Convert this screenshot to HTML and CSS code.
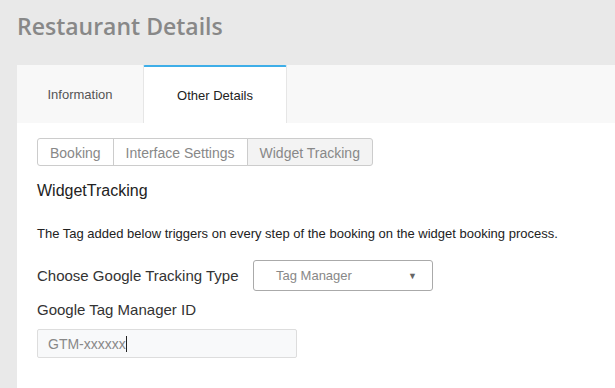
FILE: index.html
```html
<!DOCTYPE html>
<html>
<head>
    <title>Restaurant Details</title>
    <link rel="stylesheet" href="styles.css">
</head>
<body>
    <div class="page">
        <h1 class="page-title">Restaurant Details</h1>
        <div class="panel">
            <div class="tabs">
                <div class="tab">Information</div>
                <div class="tab active">Other Details</div>
            </div>
            <div class="panel-body">
                <div class="btn-group">
                    <button class="btn">Booking</button>
                    <button class="btn">Interface Settings</button>
                    <button class="btn active">Widget Tracking</button>
                </div>
                <h3 class="section-title">WidgetTracking</h3>
                <p class="note">The Tag added below triggers on every step of the booking on the widget booking process.</p>
                <div class="row">
                    <label class="field-label">Choose Google Tracking Type</label>
                    <div class="select">
                        <span>Tag Manager</span>
                        <span class="caret">&#9660;</span>
                    </div>
                </div>
                <label class="field-label">Google Tag Manager ID</label>
                <div class="input"><span>GTM-xxxxxx</span><span class="cursor"></span></div>
            </div>
        </div>
    </div>
</body>
</html>
```

FILE: styles.css
```css
body {
    margin: 0;
    font-family: "Liberation Sans", Arial, sans-serif;
    background: #e9e9e9;
}
.page {
    padding-left: 17px;
}
.page-title {
    margin: 0;
    height: 65px;
    padding-top: 10px;
    box-sizing: border-box;
    font-family: "Open Sans", sans-serif;
    font-weight: 600;
    font-size: 23px;
    color: #888;
}
.panel {
    background: #fff;
    height: 323px;
}
.tabs {
    display: flex;
    height: 58px;
    background: #f8f8f8;
}
.tab {
    width: 126px;
    display: flex;
    align-items: center;
    justify-content: center;
    font-size: 13px;
    color: #555;
    box-sizing: border-box;
}
.tab.active {
    width: 144px;
    background: #fff;
    color: #222;
    border-top: 2px solid #3eaee8;
    border-left: 1px solid #e6e6e6;
    border-right: 1px solid #e6e6e6;
    border-top-left-radius: 2px;
    border-top-right-radius: 2px;
}
.panel-body {
    padding: 15px 20px;
}
.btn-group {
    display: inline-flex;
}
.btn {
    height: 28px;
    padding: 1px 12px 0;
    font-family: "Liberation Sans", Arial, sans-serif;
    font-size: 14px;
    color: #888;
    background: #fff;
    border: 1px solid #ccc;
    margin-left: -1px;
}
.btn:first-child {
    margin-left: 0;
    border-radius: 3px 0 0 3px;
}
.btn:last-child {
    border-radius: 0 3px 3px 0;
}
.btn.active {
    background: #f3f3f3;
}
.section-title {
    margin: 16px 0 0;
    font-weight: normal;
    font-size: 16px;
    color: #222;
}
.note {
    margin: 26px 0 0;
    font-size: 13px;
    color: #222;
}
.row {
    display: flex;
    align-items: center;
    margin-top: 19px;
}
.field-label {
    display: block;
    font-size: 15px;
    color: #333;
}
.row .field-label {
    width: 216px;
}
.select {
    width: 180px;
    height: 31px;
    box-sizing: border-box;
    border: 1px solid #aaa;
    border-radius: 3px;
    display: flex;
    align-items: center;
    justify-content: space-between;
    padding: 0 15px 0 22px;
    font-size: 13px;
    color: #888;
}
.caret {
    font-size: 9px;
    color: #666;
}
.row + .field-label {
    margin-top: 10px;
}
.input {
    margin-top: 11px;
    width: 260px;
    height: 29px;
    box-sizing: border-box;
    border: 1px solid #ddd;
    border-radius: 2px;
    background: #f8f9fa;
    display: flex;
    align-items: center;
    padding-left: 10px;
    font-size: 14px;
    color: #888;
}
.cursor {
    width: 1px;
    height: 16px;
    background: #222;
}
```
